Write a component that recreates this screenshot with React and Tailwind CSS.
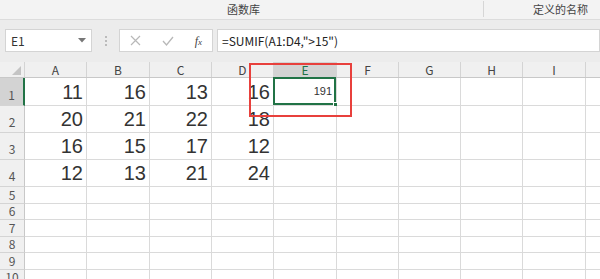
import React from "react";

const COLS = [
  { k: "A", w: "w-[62px]" },
  { k: "B", w: "w-[63px]" },
  { k: "C", w: "w-[62px]" },
  { k: "D", w: "w-[62px]" },
  { k: "E", w: "w-[63px]" },
  { k: "F", w: "w-[62px]" },
  { k: "G", w: "w-[62px]" },
  { k: "H", w: "w-[62px]" },
  { k: "I", w: "w-[63px]" },
  { k: "", w: "w-[62px]" },
];

const DATA = [
  ["11", "16", "13", "16"],
  ["20", "21", "22", "18"],
  ["16", "15", "17", "12"],
  ["12", "13", "21", "24"],
];

const ROW_H = ["h-[28px]", "h-[27px]", "h-[27px]", "h-[27px]"];

function Cell({ w, h, children, active }) {
  return (
    <div className={`${w} ${h} shrink-0 border-r border-b border-[#dadada] relative flex items-end justify-end pr-[3px] overflow-visible`}>
      {children}
      {active && (
        <div className="absolute -left-px -top-px right-0 bottom-0 border-2 border-[#217346]">
          <div className="absolute -right-[4px] -bottom-[4px] w-[5px] h-[5px] bg-[#217346] border border-white"></div>
        </div>
      )}
    </div>
  );
}

function App() {
  return (
    <div className="w-[600px] h-[279px] overflow-hidden bg-white relative font-['Microsoft_YaHei','Noto_Sans_CJK_SC','Liberation_Sans',sans-serif] text-[#333]">
      {/* ribbon bottom */}
      <div className="h-[20px] bg-[#f3f3f3] border-b border-[#dcdcdc] flex text-[11px] text-[#444]">
        <div className="w-[484px] flex items-center justify-center pl-[4px] border-r border-[#d6d6d6] h-[16px] mt-[1px]">函数库</div>
        <div className="flex-1 flex items-center pl-[49px] h-[18px]">定义的名称</div>
      </div>

      {/* formula bar */}
      <div className="h-[42px] bg-[#ececec] flex items-start pt-[9px] pl-[5px] gap-[4px]">
        <div className="w-[87px] h-[23px] bg-white border border-[#d4d4d4] flex items-center justify-between px-[5px] text-[12px] text-[#333]">
          <span>E1</span>
          <svg width="8" height="5" viewBox="0 0 8 5"><path d="M0 0 L8 0 L4 4.5 Z" fill="#777" /></svg>
        </div>
        <div className="w-[19px] h-[23px] flex flex-col items-center justify-center gap-[2px]">
          <div className="w-[2px] h-[2px] bg-[#bbb]"></div>
          <div className="w-[2px] h-[2px] bg-[#bbb]"></div>
          <div className="w-[2px] h-[2px] bg-[#bbb]"></div>
        </div>
        <div className="w-[94px] h-[23px] bg-white border border-[#d4d4d4] flex items-center px-[10px] justify-between">
          <svg width="11" height="11" viewBox="0 0 11 11"><path d="M1 1 L10 10 M10 1 L1 10" stroke="#b8b8b8" strokeWidth="1.2" /></svg>
          <svg width="12" height="10" viewBox="0 0 12 10"><path d="M1 5 L4.5 9 L11 1" stroke="#b8b8b8" strokeWidth="1.3" fill="none" /></svg>
          <span className="font-['Liberation_Serif',serif] italic text-[12px] text-[#444] leading-none">f<span className="text-[9px]">x</span></span>
        </div>
        <div className="flex-1 h-[23px] bg-white border border-[#d4d4d4] flex items-center pl-[4px] text-[12px] text-[#222]">
          =SUMIF(A1:D4,"&gt;15")
        </div>
      </div>

      {/* sheet */}
      <div>
        {/* header row */}
        <div className="flex h-[16px] bg-[#f0f0f0] border-b border-[#c8c8c8] text-[12px] text-[#444]">
          <div className="w-[25px] shrink-0 border-r border-[#d4d4d4] relative">
            <svg className="absolute right-[3px] bottom-[2px]" width="9" height="9" viewBox="0 0 9 9"><path d="M9 0 L9 9 L0 9 Z" fill="#c4c4c4" /></svg>
          </div>
          {COLS.map((c, i) => (
            <div
              key={i}
              className={`${c.w} shrink-0 border-r border-[#d4d4d4] flex items-center justify-center leading-none ${c.k === "E" ? "bg-[#d3d3d3] text-[#217346]" : ""}`}
            >
              {c.k}
            </div>
          ))}
        </div>

        {DATA.map((row, r) => (
          <div key={r} className="flex">
            <div className={`w-[25px] ${ROW_H[r]} shrink-0 border-b border-[#d4d4d4] flex items-end justify-center pb-[1px] text-[12px] text-[#555] ${r === 0 ? "bg-[#d3d3d3] border-r-2 border-r-[#217346]" : "bg-[#f0f0f0] border-r border-r-[#c8c8c8]"}`}>
              {r + 1}
            </div>
            {COLS.map((c, i) => (
              <Cell key={i} w={c.w} h={ROW_H[r]} active={r === 0 && c.k === "E"}>
                {i < 4 && <span className="text-[20px] leading-none pb-[3px] font-['Liberation_Sans',sans-serif] text-[#333]">{row[i]}</span>}
                {r === 0 && c.k === "E" && <span className="text-[11px] leading-none pb-[8px] pr-[1px] font-['Liberation_Sans',sans-serif] text-[#333]">191</span>}
              </Cell>
            ))}
          </div>
        ))}

        {[5, 6, 7, 8, 9, 10].map((n) => (
          <div key={n} className="flex">
            <div className="w-[25px] h-[16.5px] shrink-0 bg-[#f0f0f0] border-r border-[#c8c8c8] border-b border-b-[#d4d4d4] flex items-center justify-center text-[12px] text-[#555] leading-none">
              {n}
            </div>
            {COLS.map((c, i) => (
              <div key={i} className={`${c.w} h-[16.5px] shrink-0 border-r border-b border-[#dadada]`}></div>
            ))}
          </div>
        ))}
      </div>

      {/* annotation box */}
      <div className="absolute left-[249px] top-[63px] w-[103px] h-[54px] border-2 border-[#e8403c]"></div>
    </div>
  );
}

export default App;
